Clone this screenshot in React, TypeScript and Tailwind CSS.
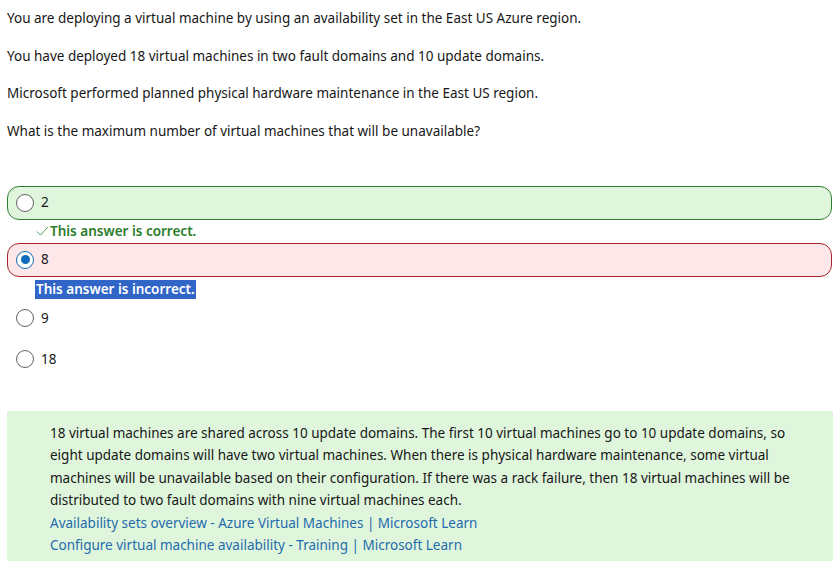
export default function App() {
  const font = { fontFamily: '"Noto Sans", "Open Sans", sans-serif' };
  return (
    <div className="min-h-screen bg-white text-[13.5px] text-[#171717]" style={font}>
      <div className="px-[7px] pt-[7px]">
        {/* Question */}
        <p className="leading-[22px]">You are deploying a virtual machine by using an availability set in the East US Azure region.</p>
        <p className="leading-[22px] mt-[15.5px]">You have deployed 18 virtual machines in two fault domains and 10 update domains.</p>
        <p className="leading-[22px] mt-[15.5px]">Microsoft performed planned physical hardware maintenance in the East US region.</p>
        <p className="leading-[22px] mt-[15.5px]">What is the maximum number of virtual machines that will be unavailable?</p>

        {/* Options */}
        <div className="mt-[44px]">
          <div className="flex items-center h-[34px] rounded-[12px] border border-[#2f7d31] bg-[#dff6dd] pl-[8px]">
            <Radio />
            <span className="ml-[7px]">2</span>
          </div>
          <div className="flex items-center h-[23px] pl-[29px] font-semibold text-[#2a7d2b]">
            <svg width="13" height="10" viewBox="0 0 13 10" className="mr-[1px]">
              <path d="M1 5.5 L4.5 9 L12 1" fill="none" stroke="#5a9a5b" strokeWidth="1" />
            </svg>
            This answer is correct.
          </div>
          <div className="flex items-center h-[34px] rounded-[12px] border border-[#a4262c] bg-[#fde7e9] pl-[8px]">
            <Radio checked />
            <span className="ml-[7px]">8</span>
          </div>
          <div className="flex items-center h-[25px] pl-[28px]">
            <span className="bg-[#3166c8] text-white font-semibold leading-[19px] px-[1px]">This answer is incorrect.</span>
          </div>
          <div className="flex items-center h-[33px] pl-[9px]">
            <Radio />
            <span className="ml-[7px]">9</span>
          </div>
          <div className="flex items-center h-[33px] pl-[9px] mt-[8px]">
            <Radio />
            <span className="ml-[7px]">18</span>
          </div>
        </div>

        {/* Explanation */}
        <div className="mt-[35px] mr-[-1px] bg-[#dff6dd] pl-[43px] pr-[20px] pt-[11px] pb-[4px] leading-[22.6px]">
          <p>
            18 virtual machines are shared across 10 update domains. The first 10 virtual machines go to 10 update domains, so eight update domains will have two virtual machines. When there is physical hardware maintenance, some virtual machines will be unavailable based on their configuration. If there was a rack failure, then 18 virtual machines will be distributed to two fault domains with nine virtual machines each.
          </p>
          <a className="block text-[#1f6bab]" href="#">Availability sets overview - Azure Virtual Machines | Microsoft Learn</a>
          <a className="block text-[#1f6bab]" href="#">Configure virtual machine availability - Training | Microsoft Learn</a>
        </div>
      </div>
    </div>
  );
}

function Radio({ checked = false }: { checked?: boolean }) {
  if (checked) {
    return (
      <span className="flex items-center justify-center w-[18px] h-[18px] rounded-full border-[1.5px] border-[#0f6cbd] bg-white">
        <span className="w-[9px] h-[9px] rounded-full bg-[#0f6cbd]" />
      </span>
    );
  }
  return <span className="block w-[18px] h-[18px] rounded-full border border-[#616161] bg-white" />;
}
